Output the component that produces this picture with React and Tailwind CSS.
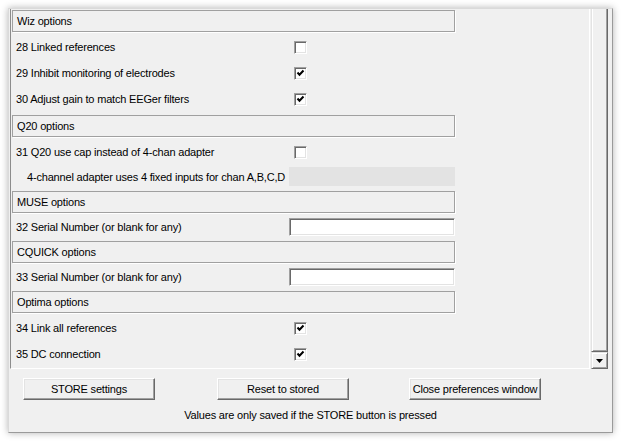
import React from "react";

const rows = [
  { type: "header", label: "Wiz options", first: true },
  { type: "check", label: "28 Linked references", checked: false },
  { type: "check", label: "29 Inhibit monitoring of electrodes", checked: true },
  { type: "check", label: "30 Adjust gain to match EEGer filters", checked: true },
  { type: "header", label: "Q20 options" },
  { type: "check", label: "31 Q20 use cap instead of 4-chan adapter", checked: false },
  { type: "info", label: "4-channel adapter uses 4 fixed inputs for chan A,B,C,D" },
  { type: "header", label: "MUSE options" },
  { type: "input", label: "32 Serial Number (or blank for any)" },
  { type: "header", label: "CQUICK options" },
  { type: "input", label: "33 Serial Number (or blank for any)" },
  { type: "header", label: "Optima options" },
  { type: "check", label: "34 Link all references", checked: true },
  { type: "check", label: "35 DC connection", checked: true },
];

function Checkbox({ checked }) {
  return (
    <div className="w-[13px] h-[13px] bg-white border border-t-[#a0a0a0] border-l-[#a0a0a0] border-b-white border-r-white shadow-[inset_1px_1px_0_#696969,inset_-1px_-1px_0_#e3e3e3] flex items-center justify-center">
      {checked && (
        <svg width="9" height="9" viewBox="0 0 9 9">
          <path d="M1.5 3.5 L3.5 5.8 L7.5 1.5" fill="none" stroke="#000" strokeWidth="2" />
        </svg>
      )}
    </div>
  );
}

function Row({ row }) {
  if (row.type === "header") {
    return (
      <div className={row.first ? "pt-[1px] pb-[2px]" : "pt-[3px] pb-[2px]"}>
        <div className="w-[443px] h-[22px] ml-[1px] border border-[#a0a0a0] shadow-[1px_1px_0_#fff] flex items-center pl-[4px] pt-[1px]">
          {row.label}
        </div>
      </div>
    );
  }
  if (row.type === "check") {
    return (
      <div className="h-[26px] flex items-center">
        <div className="w-[283px] pl-[5px] pt-[1px]">{row.label}</div>
        <Checkbox checked={row.checked} />
      </div>
    );
  }
  if (row.type === "info") {
    return (
      <div className="h-[23px] flex items-center">
        <div className="w-[278px] pl-[16px] pt-[1px] whitespace-nowrap">{row.label}</div>
        <div className="w-[166px] h-[19px] bg-[#e3e3e3]" />
      </div>
    );
  }
  return (
    <div className="h-[23px] flex items-center">
      <div className="w-[278px] pl-[5px] pt-[1px]">{row.label}</div>
      <div className="w-[166px] h-[18px] bg-white border border-t-[#a0a0a0] border-l-[#a0a0a0] border-b-white border-r-white shadow-[inset_1px_1px_0_#696969,inset_-1px_-1px_0_#e3e3e3]" />
    </div>
  );
}

function Button({ children }) {
  return (
    <div className="w-[132px] h-[22px] border border-t-white border-l-white border-b-[#696969] border-r-[#696969] shadow-[inset_-1px_-1px_0_#a0a0a0,inset_1px_1px_0_#e3e3e3] bg-[#f0f0f0] flex items-center justify-center pt-[1px]">
      {children}
    </div>
  );
}

export default function App() {
  return (
    <div
      className="w-[622px] h-[441px] bg-white pt-[8px] pl-[8px] text-[11px] tracking-[-0.18px] text-black leading-none"
      style={{ fontFamily: '"Liberation Sans", Arial, sans-serif' }}
    >
      <div className="w-[605px] h-[425px] bg-[#f0f0f0] border border-t-[#dadada] border-l-[#dadada] border-b-[#9a9a9a] border-r-[#9a9a9a] shadow-[0_0_7px_rgba(0,0,0,0.3)] flex flex-col">
        <div className="h-[360px] flex ml-[1px]">
          <div className="w-[580px] h-[360px] border-l border-l-[#8c8c8c] border-r border-r-white border-b border-b-white overflow-hidden">
            {rows.map((row, i) => (
              <Row key={i} row={row} />
            ))}
          </div>
          <div className="w-[17px] ml-[1px] flex flex-col">
            <div className="flex-1 border-l border-l-[#e3e3e3] border-r border-r-[#696969] border-b border-b-[#696969] shadow-[inset_1px_0_0_#fff,inset_-1px_-1px_0_#a0a0a0]" />
            <div className="h-[17px] border border-t-[#e3e3e3] border-l-[#e3e3e3] border-b-[#696969] border-r-[#696969] shadow-[inset_1px_1px_0_#fff,inset_-1px_-1px_0_#a0a0a0] flex items-center justify-center">
              <svg width="7" height="4" viewBox="0 0 7 4">
                <path d="M0 0 H7 L3.5 4 Z" fill="#000" />
              </svg>
            </div>
          </div>
        </div>
        <div className="flex pt-[9px] pl-[14px]">
          <Button>STORE settings</Button>
          <div className="ml-[62px]">
            <Button>Reset to stored</Button>
          </div>
          <div className="ml-[60px]">
            <Button>Close preferences window</Button>
          </div>
        </div>
        <div className="mt-[10px] text-center">Values are only saved if the STORE button is pressed</div>
      </div>
    </div>
  );
}
